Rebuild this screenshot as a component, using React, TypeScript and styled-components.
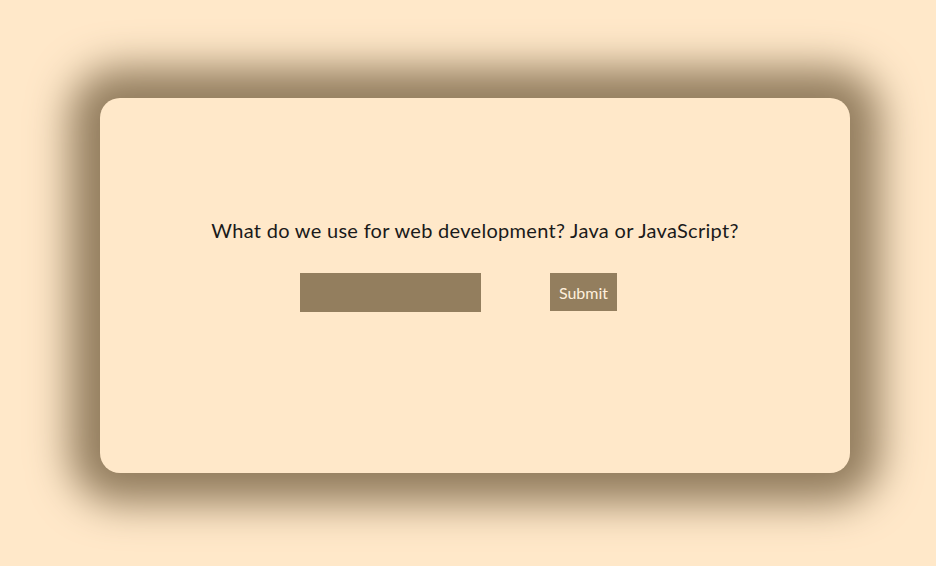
import styled, { createGlobalStyle } from 'styled-components';

const GlobalStyle = createGlobalStyle`
  body {
    margin: 0;
    background: #ffe8c9;
    font-family: Lato, "Open Sans", sans-serif;
  }
`;

const Page = styled.div`
  width: 936px;
  height: 566px;
  padding: 98px 0 0 100px;
  box-sizing: border-box;
`;

const Card = styled.div`
  width: 750px;
  height: 375px;
  background: #ffe8c9;
  border-radius: 20px;
  box-shadow: 0 0 40px 30px #937d5e;
  display: flex;
  flex-direction: column;
  align-items: center;
  padding-top: 119px;
  box-sizing: border-box;
`;

const Question = styled.p`
  margin: 0 0 30px;
  font-size: 20px;
  line-height: 26px;
  color: #1a1a1a;
  letter-spacing: 0.3px;
`;

const Form = styled.form`
  display: flex;
  align-items: flex-start;
  gap: 69px;
  padding-right: 33px;
`;

const Input = styled.input`
  width: 181px;
  height: 39px;
  border: none;
  background: #937e5e;
  box-sizing: border-box;
  outline: none;
`;

const Button = styled.button`
  width: 67px;
  height: 38px;
  border: none;
  background: #937e5e;
  color: #fff0dc;
  font-family: Lato, sans-serif;
  font-size: 16px;
  padding: 0;
  cursor: pointer;
`;

export default function App() {
  return (
    <>
      <GlobalStyle />
      <Page>
        <Card>
          <Question>What do we use for web development? Java or JavaScript?</Question>
          <Form onSubmit={(e) => e.preventDefault()}>
            <Input type="text" />
            <Button type="submit">Submit</Button>
          </Form>
        </Card>
      </Page>
    </>
  );
}
